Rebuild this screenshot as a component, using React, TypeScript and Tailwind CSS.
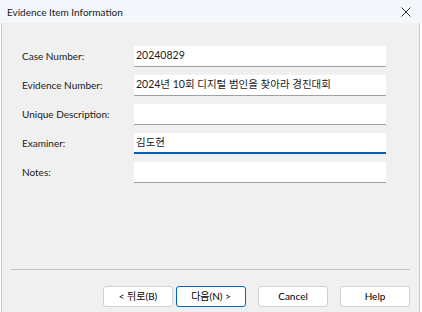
const fields = [
  { label: "Case Number:", value: "20240829" },
  { label: "Evidence Number:", value: "2024년 10회 디지털 범인을 찾아라 경진대회" },
  { label: "Unique Description:", value: "" },
  { label: "Examiner:", value: "김도현", focused: true },
  { label: "Notes:", value: "" },
];

function Button({ children, primary }: { children: React.ReactNode; primary?: boolean }) {
  return (
    <button
      className={
        primary
          ? "w-[70px] h-[21px] rounded-[3px] bg-white border border-[#0067c0] text-[10px] text-black"
          : "w-[70px] h-[21px] rounded-[3px] bg-white border border-[#d0d0d0] text-[10px] text-black"
      }
    >
      {children}
    </button>
  );
}

function App() {
  return (
    <div
      className="w-[422px] h-[312px] bg-white flex flex-col text-[10px] text-[#1a1a1a]"
      style={{ fontFamily: 'Lato, "Noto Sans CJK KR", sans-serif' }}
    >
      <div className="h-[23px] bg-[#f3f6fb] flex items-center justify-between pl-[7px] pr-[10px]">
        <span className="leading-none">Evidence Item Information</span>
        <svg width="10" height="10" viewBox="0 0 10 10" className="mr-[1px]">
          <path d="M0.5 0.5 L9.5 9.5 M9.5 0.5 L0.5 9.5" stroke="#333" strokeWidth="1" />
        </svg>
      </div>
      <div className="flex-1 bg-[#f0f0f0] border-l border-r border-[#c8c8c8] flex flex-col ml-[1px] mr-[2px]">
        <div className="flex flex-col gap-[8px] pt-[23px] pl-[20px]">
          {fields.map((f) => (
            <div key={f.label} className="flex items-center h-[21px]">
              <span className="w-[112px]">{f.label}</span>
              <div
                className={
                  f.focused
                    ? "w-[252px] h-[21px] bg-white border-b-2 border-[#005fb8] flex items-center pl-[2px] text-[10.5px]"
                    : "w-[252px] h-[21px] bg-white border-b border-[#a0a0a0] flex items-center pl-[2px] text-[10.5px]"
                }
              >
                {f.value}
              </div>
            </div>
          ))}
        </div>
        <div className="flex-1" />
        <div className="mx-[9px] border-t border-[#c0c0c0]" />
        <div className="flex justify-end items-center pr-[9px] pt-[16px] pb-[5px]">
          <Button>&lt; 뒤로(B)</Button>
          <div className="w-[3px]" />
          <Button primary>다음(N) &gt;</Button>
          <div className="w-[12px]" />
          <Button>Cancel</Button>
          <div className="w-[12px]" />
          <Button>Help</Button>
        </div>
      </div>
    </div>
  );
}

export default App;
